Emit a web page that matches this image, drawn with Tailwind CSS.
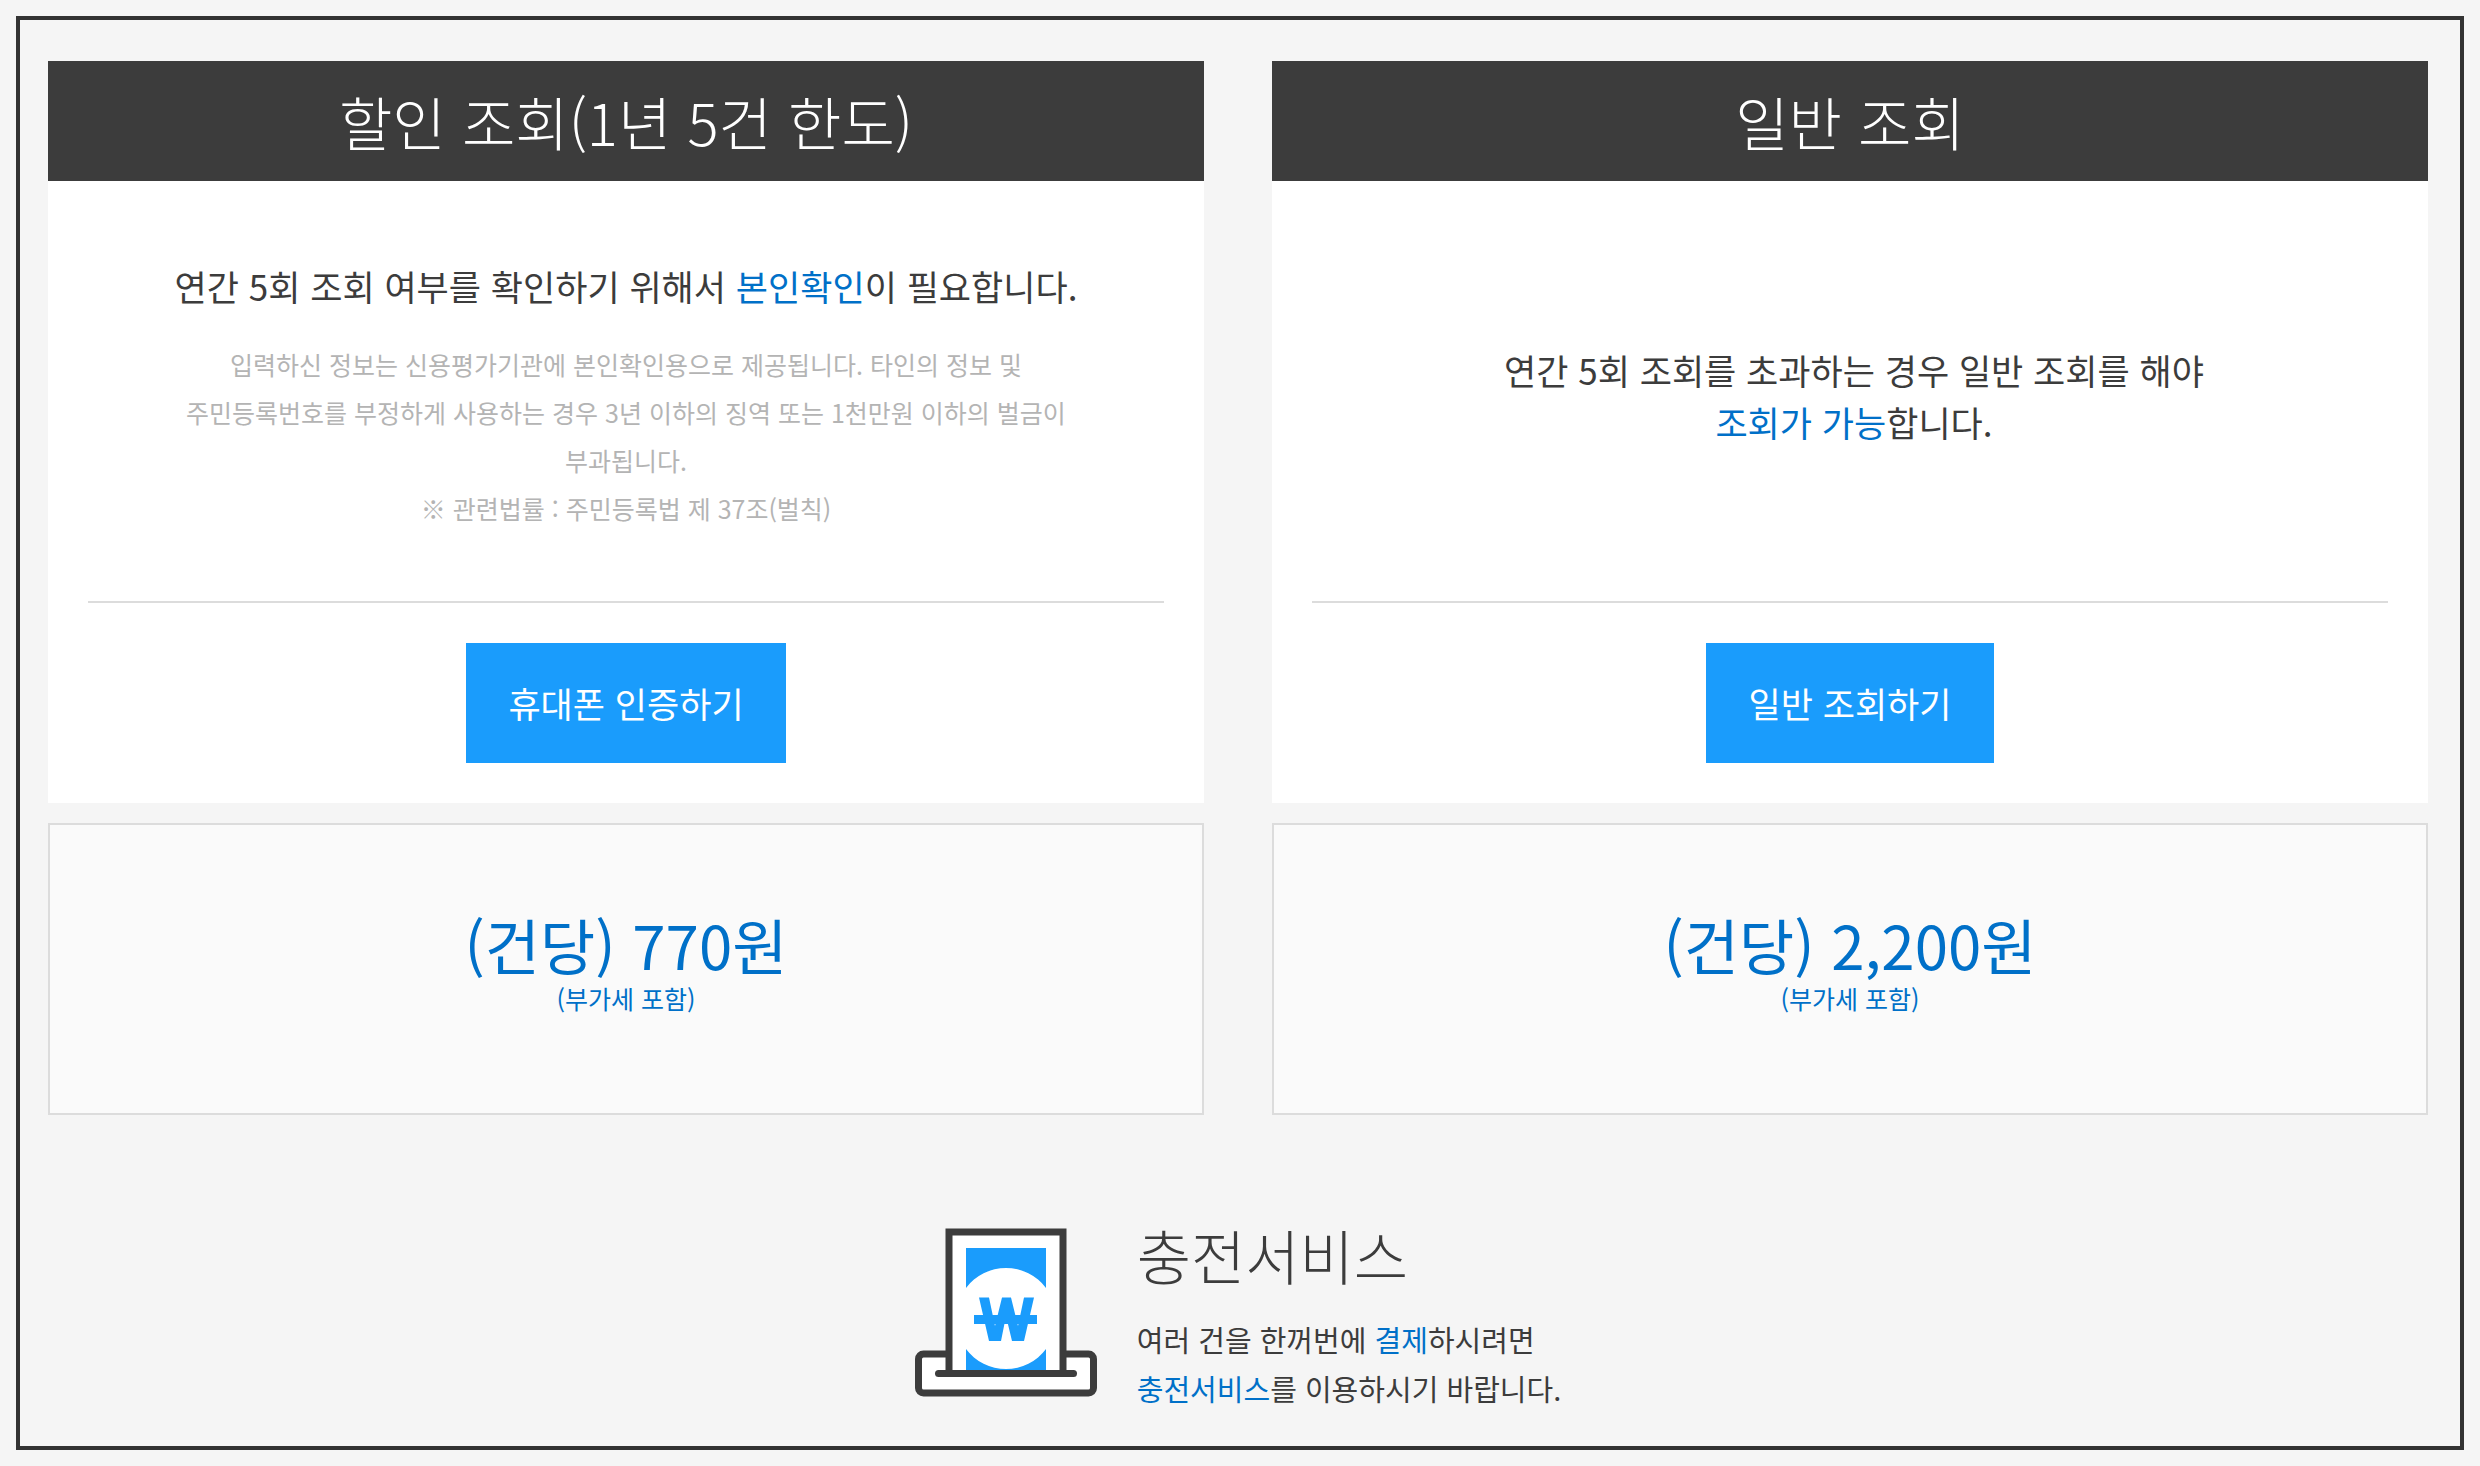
<!DOCTYPE html>
<html lang="ko">
<head>
  <meta charset="UTF-8" />
  <meta name="viewport" content="width=device-width, initial-scale=1.0" />
  <title>조회 서비스 안내</title>
  <script src="https://cdn.jsdelivr.net/npm/@tailwindcss/browser@4"></script>
</head>
<body class="bg-[#f5f5f5] p-4 font-['Noto_Sans_CJK_KR',sans-serif] text-[#3c3c3c]">

  <main class="border-4 border-[#333333] pt-[41px] pr-8 pb-[33px] pl-7">

    <div class="grid grid-cols-2 gap-x-[68px]">
      <!-- 할인 조회 -->
      <section>
        <div class="bg-white">
          <h2 class="bg-[#3c3c3c] text-white text-[58px] leading-[120px] font-light text-center">할인 조회(1년 5건 한도)</h2>
          <div class="px-10 pb-10">
            <div class="h-[422px] pt-2.5 border-b-2 border-[#dcdcdc] flex flex-col items-center justify-center text-center">
              <p class="text-[35px] leading-[52px]">연간 5회 조회 여부를 확인하기 위해서 <span class="text-[#0070c8]">본인확인</span>이 필요합니다.</p>
              <p class="mt-7 text-[25px] leading-[48px] text-[#b4b4b4]">
                입력하신 정보는 신용평가기관에 본인확인용으로 제공됩니다. 타인의 정보 및<br>
                주민등록번호를 부정하게 사용하는 경우 3년 이하의 징역 또는 1천만원 이하의 벌금이<br>
                부과됩니다.<br>
                ※ 관련법률 : 주민등록법 제 37조(벌칙)
              </p>
            </div>
            <div class="pt-10 text-center">
              <button type="button" class="align-top bg-[#1a9cfc] px-[42px] text-white text-[35px] leading-[120px]">휴대폰 인증하기</button>
            </div>
          </div>
        </div>
        <div class="mt-5 h-[292px] pb-3.5 border-2 border-[#dcdcdc] bg-[#fafafa] flex flex-col items-center justify-center text-[#0070c8]">
          <p class="text-[60px] leading-[72px]">(건당) 770원</p>
          <p class="text-[25px] leading-[36px]">(부가세 포함)</p>
        </div>
      </section>

      <!-- 일반 조회 -->
      <section>
        <div class="bg-white">
          <h2 class="bg-[#3c3c3c] text-white text-[58px] leading-[120px] font-light text-center">일반 조회</h2>
          <div class="px-10 pb-10">
            <div class="h-[422px] pt-2.5 pl-2 border-b-2 border-[#dcdcdc] flex flex-col items-center justify-center text-center">
              <p class="text-[35px] leading-[52px]">연간 5회 조회를 초과하는 경우 일반 조회를 해야<br><span class="text-[#0070c8]">조회가 가능</span>합니다.</p>
            </div>
            <div class="pt-10 text-center">
              <button type="button" class="align-top bg-[#1a9cfc] px-[42px] text-white text-[35px] leading-[120px]">일반 조회하기</button>
            </div>
          </div>
        </div>
        <div class="mt-5 h-[292px] pb-3.5 border-2 border-[#dcdcdc] bg-[#fafafa] flex flex-col items-center justify-center text-[#0070c8]">
          <p class="text-[60px] leading-[72px]">(건당) 2,200원</p>
          <p class="text-[25px] leading-[36px]">(부가세 포함)</p>
        </div>
      </section>
    </div>

    <!-- 충전서비스 -->
    <section class="mt-[100px] flex justify-center gap-10">
      <svg class="mt-[13px] w-[182px] h-[170px]" viewBox="0 0 182 170" fill="none" aria-hidden="true">
        <rect x="3.5" y="126" width="175" height="39" rx="5" fill="#fff" stroke="#3c3c3c" stroke-width="7" />
        <path d="M34 145V4H148V145Z" fill="#fff" />
        <path d="M34 145V4H148V145" stroke="#3c3c3c" stroke-width="7" />
        <path d="M51 20H131V60A50 50 0 0 0 51 60Z" fill="#1a9cfc" />
        <path d="M51 121A50 50 0 0 0 131 121V143H51Z" fill="#1a9cfc" />
        <path d="M64 69.500H74L80 98L87 69.500H96L103 98L109 69.500H119L109 113H97L91 88L86 113H74Z" fill="#1a9cfc" />
        <path d="M59 91.500H122" stroke="#1a9cfc" stroke-width="9" />
        <path d="M23.500 145.500H158.500" stroke="#3c3c3c" stroke-width="7" stroke-linecap="round" />
      </svg>
      <div>
        <h2 class="text-[59px] leading-[80px] font-light">충전서비스</h2>
        <p class="mt-5 text-[29px] leading-[49px]">여러 건을 한꺼번에 <span class="text-[#0070c8]">결제</span>하시려면<br><span class="text-[#0070c8]">충전서비스</span>를 이용하시기 바랍니다.</p>
      </div>
    </section>

  </main>

</body>
</html>
